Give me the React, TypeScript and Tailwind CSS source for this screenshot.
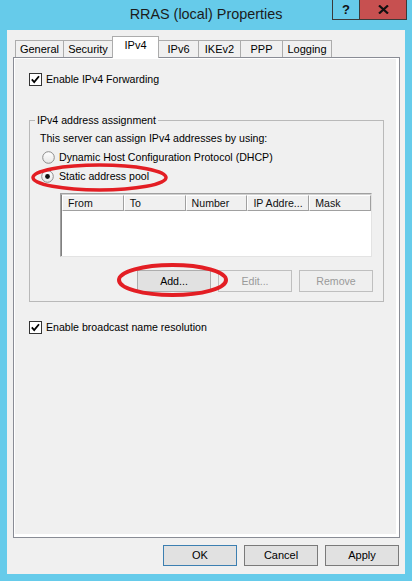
import React from "react";

function CheckBox() {
  return (
    <svg width="13" height="13" viewBox="0 0 13 13" className="shrink-0">
      <rect x="0.5" y="0.5" width="12" height="12" fill="#ffffff" stroke="#333333" />
      <polyline points="2.8,6.3 5.2,9 10,3.2" fill="none" stroke="#000000" strokeWidth="1.8" />
    </svg>
  );
}

function Radio({ checked }: { checked?: boolean }) {
  return (
    <svg width="13" height="13" viewBox="0 0 13 13" className="shrink-0">
      <defs>
        <linearGradient id="rg" x1="0" y1="0" x2="0" y2="1">
          <stop offset="0" stopColor="#ffffff" />
          <stop offset="1" stopColor="#e6e6e6" />
        </linearGradient>
      </defs>
      <circle cx="6.5" cy="6.5" r="5.8" fill="url(#rg)" stroke="#8c8c8c" />
      {checked && <circle cx="6.5" cy="6.5" r="2.4" fill="#111111" />}
    </svg>
  );
}

const tabs = [
  { label: "General", w: "w-[49px]" },
  { label: "Security", w: "w-[50px]" },
  { label: "IPv4", w: "w-[47px]", sel: true },
  { label: "IPv6", w: "w-[41px]" },
  { label: "IKEv2", w: "w-[43px]" },
  { label: "PPP", w: "w-[43px]" },
  { label: "Logging", w: "w-[50px]" },
];

const cols = ["From", "To", "Number", "IP Addre...", "Mask"];

export default function App() {
  return (
    <div className="relative w-[412px] h-[581px] bg-[#66CBEA] font-['Liberation_Sans',Arial,sans-serif] text-[10.6px] text-black leading-none overflow-hidden">
      {/* Title bar */}
      <div className="grid grid-cols-[1fr_auto_1fr] h-[30px]">
        <div />
        <div className="text-[14.4px] text-[#1b1b1b] pt-[7px] whitespace-nowrap">RRAS (local) Properties</div>
        <div className="flex justify-end items-start pr-[5px]">
          <div className="w-[28px] h-[20px] border border-t-0 border-[#3a3a3a] flex items-center justify-center font-bold text-[13px] text-[#111]">
            ?
          </div>
          <div className="w-[47px] h-[20px] bg-[#C75050] border border-t-0 border-l-0 border-[#3a3a3a] flex items-center justify-center">
            <svg width="11" height="9" viewBox="0 0 11 9">
              <path d="M1 0.5 L10 8.5 M10 0.5 L1 8.5" stroke="#111111" strokeWidth="2.2" />
            </svg>
          </div>
        </div>
      </div>

      {/* Client area */}
      <div className="ml-[7px] w-[398px] h-[544px] bg-[#F0F0F0] pt-[6px] pl-[6px] flex flex-col">
        {/* Tabs */}
        <div className="relative z-10 flex items-end pl-[2px] h-[22px] mb-[-1px]">
          {tabs.map((t, i) =>
            t.sel ? (
              <div
                key={t.label}
                className={`${t.w} h-[22px] ${i > 0 ? "-ml-px" : ""} relative z-10 bg-white border border-b-0 border-[#ACACAC] flex items-center justify-center pb-[4px] text-[11px]`}
              >
                {t.label}
              </div>
            ) : (
              <div
                key={t.label}
                className={`${t.w} h-[17px] mb-px ${i > 0 ? "-ml-px" : ""} bg-[#F0F0F0] border border-b-0 border-[#ACACAC] flex items-center justify-center text-[11px]`}
              >
                {t.label}
              </div>
            )
          )}
        </div>

        {/* Tab panel */}
        <div className="w-[387px] h-[481px] border border-[#898C95]">
          <div className="h-full border-l border-t border-r-[3px] border-b-[3px] border-white pl-[14px] pt-[14px] flex flex-col">
            <div className="flex items-center gap-[4px] h-[13px]">
              <CheckBox />
              <span>Enable IPv4 Forwarding</span>
            </div>

            <fieldset className="mt-[27px] w-[355px] border border-[#B9B9B9] pl-[10px] pr-[10px] pb-[9px] flex flex-col">
              <legend className="-ml-[5px] px-[2px] leading-[14px]">IPv4 address assignment</legend>
              <div className="mt-[4px] h-[15px] leading-[15px]">This server can assign IPv4 addresses by using:</div>
              <div className="mt-[5px] ml-[2px] h-[13px] flex items-center gap-[4px]">
                <Radio />
                <span>Dynamic Host Configuration Protocol (DHCP)</span>
              </div>
              <div className="mt-[6px] ml-[1px] h-[13px] flex items-center gap-[5px]">
                <Radio checked />
                <span>Static address pool</span>
              </div>

              {/* List view */}
              <div className="mt-[10px] ml-[20px] w-[312px] h-[64px] border border-t-[#A0A0A0] border-l-[#A0A0A0] border-r-[#E3E3E3] border-b-[#E3E3E3] bg-white">
                <div className="h-full border-l border-t border-l-[#808080] border-t-[#D0D0D0] flex flex-col">
                  <div className="flex h-[16px]">
                    {cols.map((c) => (
                      <div
                        key={c}
                        className="w-[62px] h-[16px] bg-[#F0F0F0] border-l border-t border-white border-r border-b border-r-[#A0A0A0] border-b-[#A0A0A0] pl-[5px] flex items-center text-[#111]"
                      >
                        {c}
                      </div>
                    ))}
                  </div>
                  <div className="flex-1 bg-white" />
                </div>
              </div>

              {/* Buttons */}
              <div className="mt-[13px] flex justify-end gap-[7px]">
                <div className="w-[74px] h-[22px] bg-[#E1E1E1] border border-[#ADADAD] flex items-center justify-center">
                  Add...
                </div>
                <div className="w-[74px] h-[22px] bg-[#EFEFEF] border border-[#BFBFBF] flex items-center justify-center text-[#9A9A9A]">
                  Edit...
                </div>
                <div className="w-[74px] h-[22px] bg-[#EFEFEF] border border-[#BFBFBF] flex items-center justify-center text-[#9A9A9A]">
                  Remove
                </div>
              </div>
            </fieldset>

            <div className="mt-[19px] flex items-center gap-[4px] h-[13px]">
              <CheckBox />
              <span>Enable broadcast name resolution</span>
            </div>
          </div>
        </div>

        {/* Dialog buttons */}
        <div className="mt-[7px] pr-[6px] flex justify-end gap-[7px]">
          <div className="w-[74px] h-[21px] bg-[#E1E1E1] border border-[#3C7FB1] flex items-center justify-center text-[11px]">OK</div>
          <div className="w-[74px] h-[21px] bg-[#E1E1E1] border border-[#7A7A7A] flex items-center justify-center text-[11px]">Cancel</div>
          <div className="w-[74px] h-[21px] bg-[#E1E1E1] border border-[#7A7A7A] flex items-center justify-center text-[11px]">Apply</div>
        </div>
      </div>

      {/* Red annotation ellipses */}
      <svg className="absolute inset-0 pointer-events-none" width="412" height="581" viewBox="0 0 412 581">
        <ellipse cx="99.5" cy="177.5" rx="66.5" ry="12.5" fill="none" stroke="#E31E24" strokeWidth="3.5" />
        <ellipse cx="172.5" cy="280" rx="53.5" ry="15" fill="none" stroke="#E31E24" strokeWidth="4" />
      </svg>
    </div>
  );
}
